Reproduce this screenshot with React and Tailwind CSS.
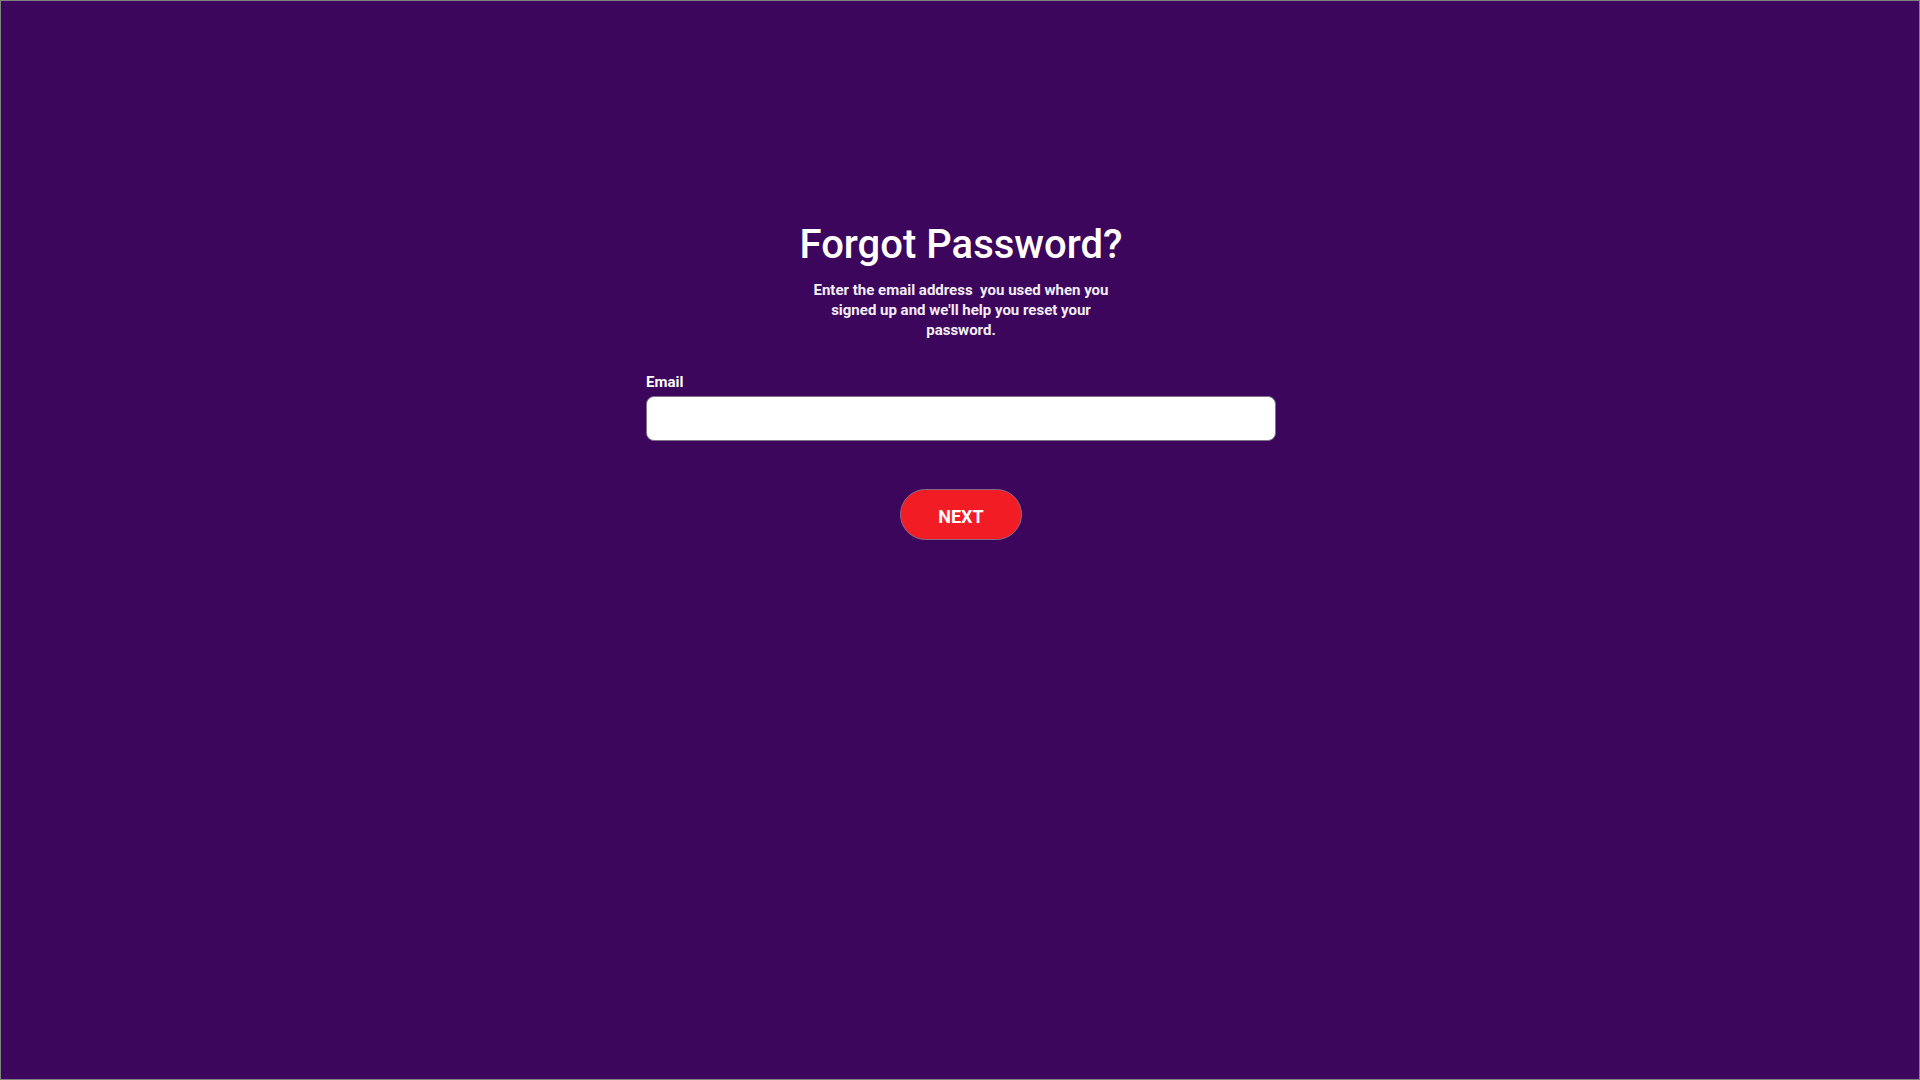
import { useState } from "react";

const App = () => {
  const [email, setEmail] = useState("");
  return (
    <div className="min-h-screen h-screen w-full bg-[#3c065c] border border-[#808080] font-['Roboto',sans-serif] text-white overflow-hidden">
      <div className="flex flex-col items-center pt-[220px] pl-[2px]">
        <h1 className="text-[40px] leading-[48px] font-medium">Forgot Password?</h1>
        <p className="mt-[11px] w-[312px] text-center text-[15px] leading-[20px] font-bold text-[#f4eef6]">
          Enter the email address{"\u00a0"} you used when you signed up and we'll help you reset your password.
        </p>
        <div className="mt-[32px] w-[630px] flex flex-col">
          <label className="text-[15px] leading-[20px] font-bold">Email</label>
          <input
            type="email"
            value={email}
            onChange={(e) => setEmail(e.target.value)}
            className="mt-[4px] h-[45px] w-full rounded-[8px] bg-white border border-[#7d7388] px-3 text-black outline-none"
          />
        </div>
        <button className="mt-[48px] w-[122px] h-[51px] pt-[4px] rounded-full bg-[#f21d24] border border-[#8a6a86] text-[18px] font-bold text-white cursor-pointer">
          NEXT
        </button>
      </div>
    </div>
  );
};

export default App;
